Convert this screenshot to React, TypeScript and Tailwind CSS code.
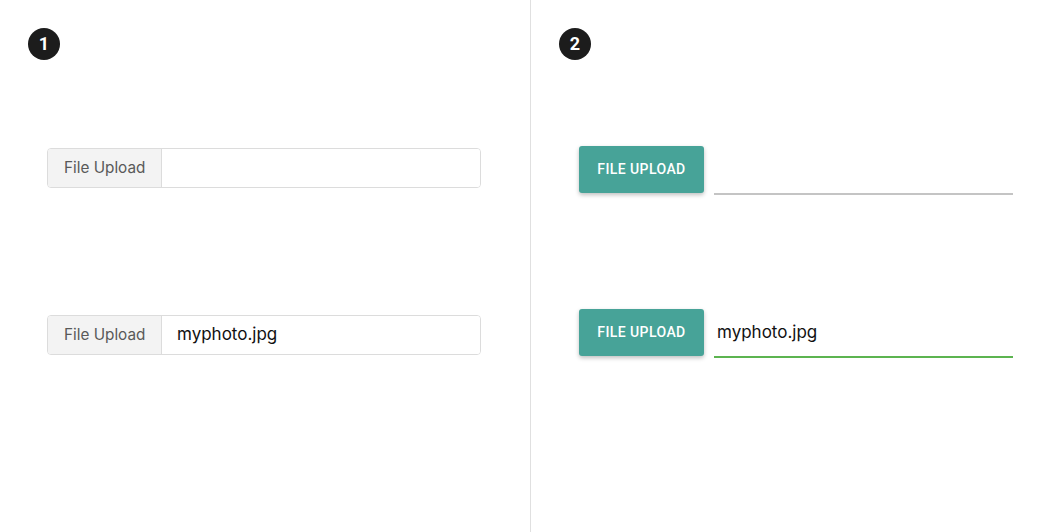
import React from "react";

function Badge({ n }: { n: string }) {
  return (
    <div className="w-8 h-8 rounded-full bg-[#1c1c1c] text-white flex items-center justify-center text-[18px] font-bold leading-none [font-family:Roboto,'Noto_Sans',sans-serif]">
      {n}
    </div>
  );
}

function BootstrapGroup({ value }: { value?: string }) {
  return (
    <div className="flex h-[40px] w-[434px] rounded-[4px] border border-[#dcdcdc] overflow-hidden">
      <div className="w-[114px] bg-[#f3f3f3] border-r border-[#dcdcdc] flex items-center pl-4 text-[15.3px] text-[#595959] [font-family:Inter,'Noto_Sans',sans-serif]">
        File Upload
      </div>
      <div className="flex-1 bg-white flex items-center pl-[15px] text-[17px] text-[#111] [font-family:Inter,'Noto_Sans',sans-serif]">
        {value}
      </div>
    </div>
  );
}

function MaterialGroup({ value }: { value?: string }) {
  return (
    <div className="flex items-start gap-[10px]">
      <div className="w-[125px] h-[47px] rounded-[3px] bg-[#47a398] text-white flex items-center justify-center text-[14px] font-medium tracking-[0.03em] uppercase shadow-[0_2px_4px_rgba(0,0,0,0.25)] [font-family:Roboto,sans-serif]">
        File Upload
      </div>
      <div
        className={
          "w-[299px] h-[49px] flex items-center pl-[3px] text-[17px] text-[#111] [font-family:Inter,'Noto_Sans',sans-serif] " +
          (value ? "border-b-2 border-[#5cb450]" : "border-b-2 border-[#c4c4c4]")
        }
      >
        {value}
      </div>
    </div>
  );
}

export default function App() {
  return (
    <div className="w-[1064px] h-[532px] bg-white flex">
      <div className="w-[531px] h-full border-r border-[#e0e0e0] pt-7 pl-7">
        <Badge n="1" />
        <div className="pl-[19px] mt-[88px]">
          <BootstrapGroup />
        </div>
        <div className="pl-[19px] mt-[127px]">
          <BootstrapGroup value="myphoto.jpg" />
        </div>
      </div>
      <div className="flex-1 h-full pt-7 pl-7">
        <Badge n="2" />
        <div className="pl-[20px] mt-[86px]">
          <MaterialGroup />
        </div>
        <div className="pl-[20px] mt-[114px]">
          <MaterialGroup value="myphoto.jpg" />
        </div>
      </div>
    </div>
  );
}
